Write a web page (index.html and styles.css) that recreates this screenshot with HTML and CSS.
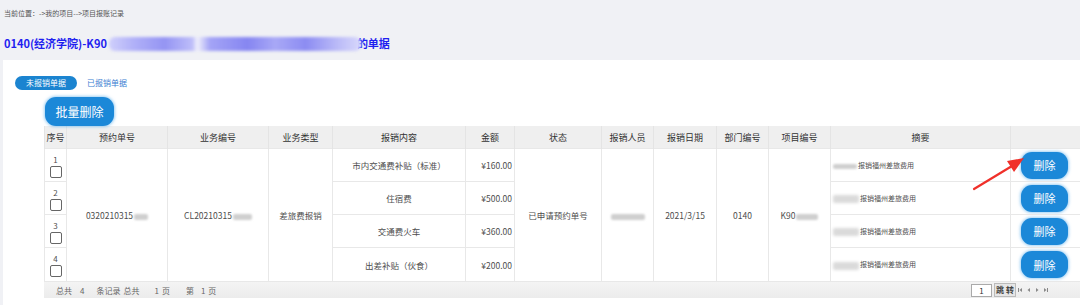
FILE: index.html
```html
<!DOCTYPE html>
<html lang="zh">
<head>
<meta charset="utf-8">
<title>项目报账记录</title>
<link rel="stylesheet" href="styles.css">
</head>
<body>
<div class="crumb">当前位置：-&gt;我的项目--&gt;项目报账记录</div>
<div class="title">0140(经济学院)-K90<span class="title-blur"></span>的单据</div>
<div class="panel">
  <div class="tabs">
    <span class="tab tab-active">未报销单据</span>
    <span class="tab">已报销单据</span>
  </div>
  <div class="toolbar"><button class="btn btn-batch">批量删除</button></div>
  <div class="grid-wrap">
    <table class="grid">
      <colgroup>
        <col class="c1"><col class="c2"><col class="c3"><col class="c4"><col class="c5"><col class="c6"><col class="c7"><col class="c8"><col class="c9"><col class="c10"><col class="c11"><col class="c12"><col class="c13">
      </colgroup>
      <thead>
        <tr>
          <th>序号</th><th>预约单号</th><th>业务编号</th><th>业务类型</th><th>报销内容</th><th>金额</th><th>状态</th><th>报销人员</th><th>报销日期</th><th>部门编号</th><th>项目编号</th><th>摘要</th><th></th>
        </tr>
      </thead>
      <tbody>
        <tr>
          <td class="idx"><span class="num">1</span><span class="chk"></span></td>
          <td rowspan="4">0320210315<span class="blur b-a"></span></td>
          <td rowspan="4">CL20210315<span class="blur b-b"></span></td>
          <td rowspan="4">差旅费报销</td>
          <td>市内交通费补贴（标准）</td>
          <td class="amt">¥160.00</td>
          <td rowspan="4">已申请预约单号</td>
          <td rowspan="4"><span class="blur b-c"></span></td>
          <td rowspan="4">2021/3/15</td>
          <td rowspan="4">0140</td>
          <td rowspan="4">K90<span class="blur b-d"></span></td>
          <td class="memo"><span class="blur b-e"></span>报销福州差旅费用</td>
          <td class="op"><button class="btn btn-del">删除</button></td>
        </tr>
        <tr>
          <td class="idx"><span class="num">2</span><span class="chk"></span></td>
          <td>住宿费</td>
          <td class="amt">¥500.00</td>
          <td class="memo"><span class="blur b-f"></span>报销福州差旅费用</td>
          <td class="op"><button class="btn btn-del">删除</button></td>
        </tr>
        <tr>
          <td class="idx"><span class="num">3</span><span class="chk"></span></td>
          <td>交通费火车</td>
          <td class="amt">¥360.00</td>
          <td class="memo"><span class="blur b-f"></span>报销福州差旅费用</td>
          <td class="op"><button class="btn btn-del">删除</button></td>
        </tr>
        <tr class="last">
          <td class="idx"><span class="num">4</span><span class="chk"></span></td>
          <td>出差补贴（伙食）</td>
          <td class="amt">¥200.00</td>
          <td class="memo"><span class="blur b-f"></span>报销福州差旅费用</td>
          <td class="op"><button class="btn btn-del">删除</button></td>
        </tr>
      </tbody>
    </table>
    <div class="pager">
      <div class="pager-info">
        <span>总共</span><span class="g1">4</span><span class="g2">条记录</span><span class="g3">总共</span><span class="g4">1</span><span class="g5">页</span><span class="g6">第</span><span class="g7">1</span><span class="g8">页</span>
      </div>
      <div class="pager-ctrl">
        <span class="pg-input">1</span>
        <span class="pg-go">跳 转</span>
        <svg class="pg-icons" width="30" height="6" viewBox="0 0 30 6">
          <rect x="0" y="1" width="1" height="4" fill="#888"/>
          <path d="M4 1 L1.5 3 L4 5 Z" fill="#888"/>
          <path d="M12 1 L9.5 3 L12 5 Z" fill="#888"/>
          <path d="M18 1 L20.5 3 L18 5 Z" fill="#888"/>
          <path d="M26 1 L28.5 3 L26 5 Z" fill="#888"/>
          <rect x="29" y="1" width="1" height="4" fill="#888"/>
        </svg>
      </div>
    </div>
  </div>
</div>
<svg class="arrow" width="60" height="44" viewBox="0 0 60 44">
  <path d="M2 36 L40 13" stroke="#f0302a" stroke-width="2.2" stroke-linecap="round"/>
  <path d="M52 5 L35 8 L42 19 Z" fill="#f0302a"/>
</svg>
</body>
</html>
```

FILE: styles.css
```css
html, body {
  margin: 0;
  padding: 0;
}
body {
  width: 1080px;
  height: 305px;
  overflow: hidden;
  background: #f0f1f5;
  font-family: "Noto Sans CJK SC", "Noto Sans", sans-serif;
  color: #555;
  position: relative;
}
.crumb {
  height: 26px;
  line-height: 26px;
  padding-left: 4px;
  font-size: 7px;
  color: #555;
}
.title {
  height: 34px;
  line-height: 34px;
  padding-left: 4px;
  font-size: 11px;
  font-weight: bold;
  color: #1f1ff0;
  white-space: nowrap;
}
.title-blur {
  display: inline-block;
  vertical-align: middle;
  width: 252px;
  height: 14px;
  margin: -2px -4px 0 2px;
  border-radius: 6px;
  background: linear-gradient(90deg, #cfcffb 0, #b0b0f8 10%, #9494f3 22%, #bdbdf9 33%, #f0f0fb 35%, #a4a4f6 40%, #8686f1 55%, #a8a8f6 66%, #8c8cf2 78%, #b8b8f7 90%, #d8d8fb 100%);
  filter: blur(1.5px);
}
.panel {
  margin-left: 3px;
  background: #fff;
  height: 245px;
  padding-top: 16px;
  box-sizing: border-box;
}
.tabs {
  display: flex;
  align-items: center;
  gap: 10px;
  padding-left: 12px;
  height: 14px;
}
.tab {
  font-size: 8px;
  color: #3a80d2;
  line-height: 14px;
}
.tab-active {
  width: 62px;
  height: 14px;
  border-radius: 7px;
  background: #1b84d0;
  color: #fff;
  text-align: center;
}
.toolbar {
  padding-left: 42px;
  margin-top: 7px;
  height: 29px;
}
.btn {
  border: none;
  background: #1b88d8;
  color: #fff;
  font-family: "Noto Sans CJK SC", sans-serif;
  padding: 0;
  box-shadow: 0 0 3px 1px rgba(80, 170, 235, 0.55);
}
.btn-batch {
  width: 69px;
  height: 29px;
  border-radius: 11px;
  font-size: 12px;
}
.btn-del {
  width: 47px;
  height: 27px;
  border-radius: 11px;
  font-size: 11px;
  display: block;
  margin-left: 10px;
}
.grid-wrap {
  margin-left: 41px;
  width: 1036px;
}
.grid {
  width: 1036px;
  border-collapse: collapse;
  table-layout: fixed;
}
.c1 { width: 22px; }
.c2 { width: 101px; }
.c3 { width: 101px; }
.c4 { width: 64px; }
.c5 { width: 133px; }
.c6 { width: 49px; }
.c7 { width: 87px; }
.c8 { width: 52px; }
.c9 { width: 63px; }
.c10 { width: 52px; }
.c11 { width: 62px; }
.c12 { width: 180px; }
.c13 { width: 70px; }
.grid th {
  height: 22px;
  background: #efefef;
  font-size: 9px;
  font-weight: normal;
  color: #333;
  border-left: 1px solid #e4e4e4;
  border-right: 1px solid #e4e4e4;
  padding: 0;
  text-align: center;
}
.grid td {
  height: 32px;
  padding: 0;
  font-size: 8.5px;
  color: #4d4d4d;
  text-align: center;
  border: 1px solid #e8e8e8;
  white-space: nowrap;
}
.grid tr.last td {
  height: 33px;
}
.grid td.amt {
  text-align: right;
  padding-right: 2px;
}
.grid td.memo {
  text-align: left;
  padding-left: 2px;
  font-size: 7px;
}
.grid td.op {
  vertical-align: middle;
}
.idx .num {
  display: block;
  font-size: 8px;
  line-height: 9px;
  margin-top: 2px;
}
.idx .chk {
  display: block;
  width: 10px;
  height: 10px;
  margin: 2px auto 0;
  border: 1px solid #666;
  border-radius: 2px;
  background: #fff;
}
.blur {
  display: inline-block;
  vertical-align: middle;
  background: #cfcfcf;
  filter: blur(1px);
  border-radius: 2px;
}
.b-a { width: 14px; height: 6px; margin-left: 1px; }
.b-b { width: 19px; height: 6px; margin-left: 1px; }
.b-c { width: 34px; height: 6px; }
.b-d { width: 22px; height: 6px; margin-left: 1px; }
.b-e { width: 24px; height: 5px; margin-right: 1px; }
.b-f { width: 26px; height: 8px; margin-right: 1px; background: #dadada; filter: blur(1.5px); }
.pager {
  display: flex;
  justify-content: space-between;
  align-items: center;
  height: 16px;
  background: linear-gradient(#f4f4f4, #ececec);
  font-size: 8px;
  color: #666;
}
.pager-info {
  padding-left: 12px;
  display: flex;
  white-space: nowrap;
}
.g1 { margin-left: 8px; }
.g2 { margin-left: 12px; }
.g3 { margin-left: 3px; }
.g4 { margin-left: 15px; }
.g5 { margin-left: 3px; }
.g6 { margin-left: 16px; }
.g7 { margin-left: 7px; }
.g8 { margin-left: 3px; }
.pager-ctrl {
  display: flex;
  align-items: center;
  padding-right: 32px;
}
.pg-input {
  width: 19px;
  height: 11px;
  line-height: 11px;
  border: 1px solid #aaa;
  background: #fff;
  text-align: center;
  font-size: 8px;
  color: #333;
}
.pg-go {
  margin-left: 2px;
  width: 20px;
  height: 12px;
  line-height: 12px;
  border: 1px solid #bbb;
  background: #e6e6e6;
  text-align: center;
  font-size: 8px;
  font-weight: bold;
  color: #444;
}
.pg-icons {
  margin-left: 2px;
}
.arrow {
  position: absolute;
  left: 972px;
  top: 153px;
}
```
